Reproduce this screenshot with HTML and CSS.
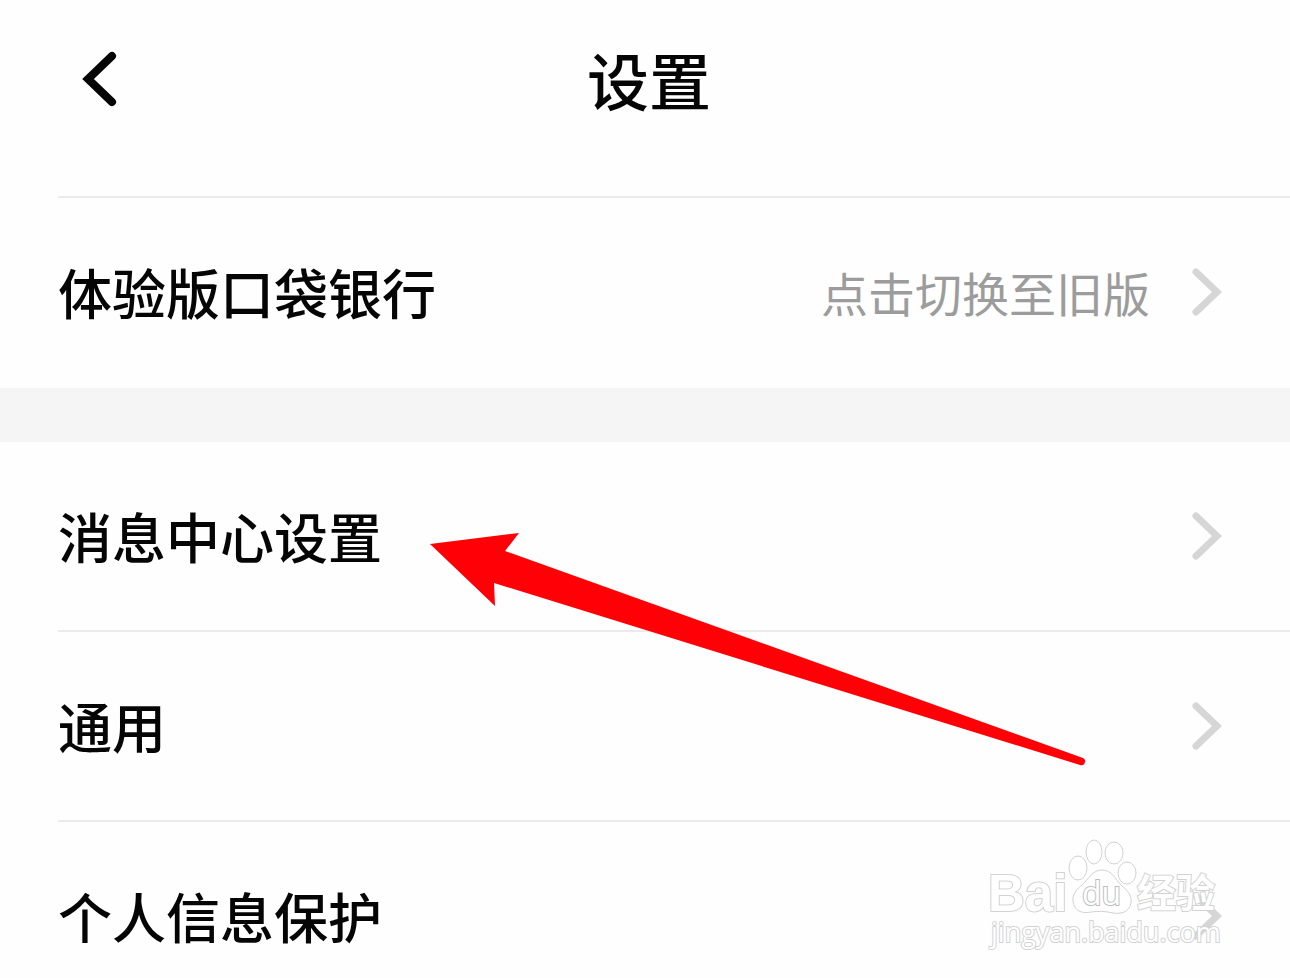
FILE: index.html
```html
<!DOCTYPE html>
<html lang="zh-CN">
  <head>
    <meta charset="UTF-8" />
    <meta name="viewport" content="width=device-width, initial-scale=1.0" />
    <title>设置</title>
    <link rel="stylesheet" href="styles.css">
  </head>
  <body>
    <div class="screen">
      <header class="header">
        <button class="back-btn" type="button" aria-label="返回">
          <svg width="36" height="56" viewBox="0 0 36 56">
            <path d="M31 5 L7 28 L31 51" />
          </svg>
        </button>
        <h1>设置</h1>
      </header>

      <nav class="group">
        <a class="row" href="#version">
          <span class="label">体验版口袋银行</span>
          <span class="value">点击切换至旧版</span>
          <svg class="chevron" width="32" height="48" viewBox="0 0 32 48">
            <path d="M6 4 L27 24 L6 44" />
          </svg>
        </a>
      </nav>

      <nav class="group">
        <a class="row" href="#message">
          <span class="label">消息中心设置</span>
          <svg class="chevron" width="32" height="48" viewBox="0 0 32 48">
            <path d="M6 4 L27 24 L6 44" />
          </svg>
        </a>
        <a class="row" href="#general">
          <span class="label">通用</span>
          <svg class="chevron" width="32" height="48" viewBox="0 0 32 48">
            <path d="M6 4 L27 24 L6 44" />
          </svg>
        </a>
        <a class="row" href="#privacy">
          <span class="label">个人信息保护</span>
          <svg class="chevron" width="32" height="48" viewBox="0 0 32 48">
            <path d="M6 4 L27 24 L6 44" />
          </svg>
        </a>
      </nav>

      <!-- red arrow pointing at the message settings row -->
      <svg class="arrow" width="660" height="240" viewBox="0 0 660 240">
        <path d="M0 14 L89 3 L75 21 L653 228 Q656 230 655 232 Q654 236 650 235 L64 53 L65 76 Z" />
      </svg>

      <svg class="watermark" width="270" height="150" viewBox="0 0 270 150">
        <text class="wm-bai" x="18" y="91">Bai</text>
        <ellipse cx="108" cy="48" rx="9" ry="12" />
        <ellipse cx="124" cy="32" rx="8" ry="12" />
        <ellipse cx="144" cy="33" rx="9" ry="11" />
        <ellipse cx="157" cy="53" rx="9" ry="11" />
        <path d="M132 50 C142 50 145 59 152 66 C158 71 162 76 161 83 C159 93 150 94 143 93 C135 91 128 91 121 92 C112 94 104 91 103 81 C102 74 107 69 112 65 C119 59 122 50 132 50 Z" />
        <text class="wm-du" x="112" y="85">du</text>
        <text class="wm-cn" x="167" y="87">经验</text>
        <text class="wm-url" x="21" y="122">jingyan.baidu.com</text>
      </svg>
    </div>
  </body>
</html>
```

FILE: styles.css
```css
* {
  box-sizing: border-box;
}
body {
  margin: 0;
  font-family: "Noto Sans CJK SC", sans-serif;
  background-color: #fefefe;
  color: #050505;
}
.screen {
  position: relative;
  height: 100vh;
  overflow: hidden;
}
.header {
  display: grid;
  grid-template-columns: 117px 1fr 117px;
  align-items: center;
  height: 196px;
  padding-bottom: 38px;
}
.header h1 {
  margin: 0;
  padding-left: 8px;
  font-size: 62px;
  font-weight: 500;
  line-height: 90px;
  text-align: center;
}
.back-btn {
  justify-self: end;
  display: flex;
  padding: 0;
  border: none;
  background: none;
  cursor: pointer;
}
.back-btn path {
  fill: none;
  stroke: #050505;
  stroke-width: 8;
  stroke-linecap: round;
}
.group {
  padding-bottom: 2px;
}
.group + .group {
  border-top: 54px solid #f5f5f5;
}
.row {
  display: flex;
  align-items: center;
  box-sizing: content-box;
  height: 188px;
  margin-left: 58px;
  padding-right: 68px;
  border-top: 2px solid #ebebeb;
  color: inherit;
  text-decoration: none;
}
.group + .group .row:first-child {
  border-top: none;
}
.label {
  flex: 1;
  font-size: 54px;
  font-weight: 500;
  line-height: 80px;
}
.value {
  margin-right: 40px;
  font-size: 47px;
  font-weight: 400;
  line-height: 70px;
  color: #9c9c9c;
}
.chevron path {
  fill: none;
  stroke: #d6d6d6;
  stroke-width: 7;
  stroke-linecap: round;
}
.arrow {
  position: absolute;
  top: 530px;
  left: 430px;
  fill: #ff0006;
  pointer-events: none;
}
.watermark {
  position: absolute;
  right: 50px;
  bottom: 8px;
  fill: #fff;
  stroke: #d2d2d2;
  stroke-width: 1;
  pointer-events: none;
}
.watermark text {
  paint-order: stroke;
  stroke-width: 2;
}
.wm-bai {
  font: bold 51px "Liberation Sans", sans-serif;
}
.watermark .wm-du {
  font: 32px "Open Sans", sans-serif;
  stroke: #bdbdbd;
}
.wm-cn {
  font: bold 39px "Noto Sans CJK SC", sans-serif;
}
.wm-url {
  font: 27px "Open Sans", sans-serif;
}
```
